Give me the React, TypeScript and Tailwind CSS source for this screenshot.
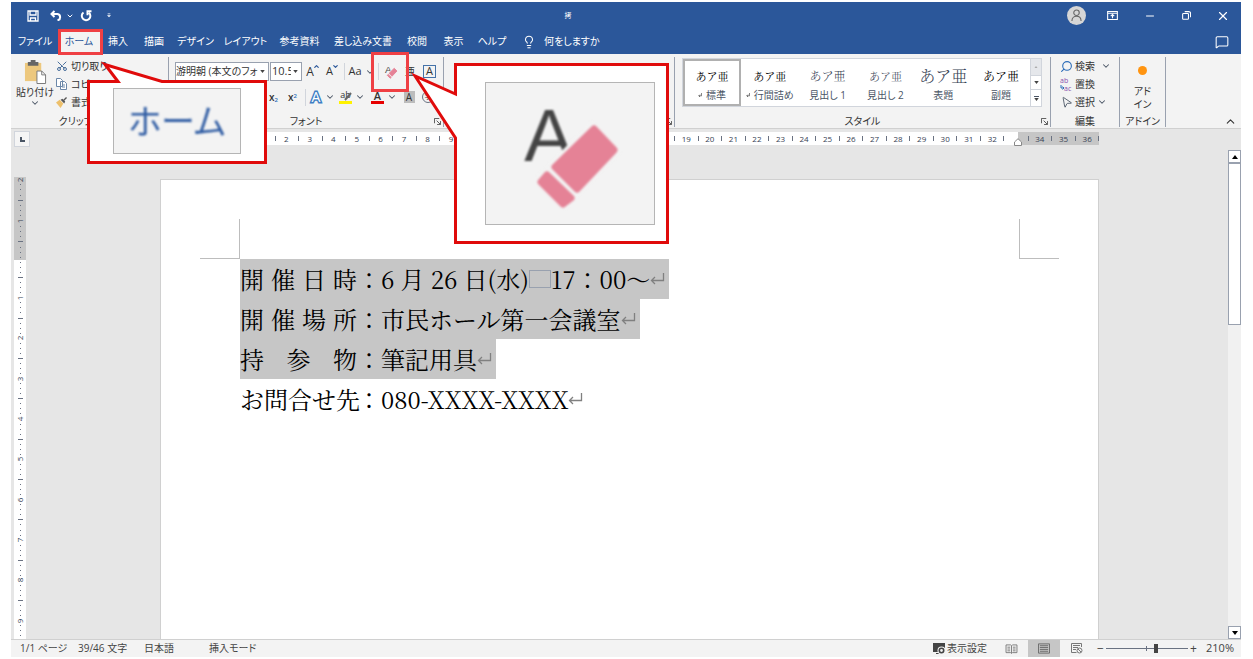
import type { ReactNode } from "react";
import {
  ChevronDown,
  ChevronUp,
  Lightbulb,
  MessageSquare,
  Minus,
  MousePointer2,
  Scissors,
  Search,
  X,
} from "lucide-react";

const tabs = [
  { label: "ファイル", width: "w-[46px]" },
  { label: "ホーム", width: "w-[42px]", active: true },
  { label: "挿入", width: "w-[36px]" },
  { label: "描画", width: "w-[36px]" },
  { label: "デザイン", width: "w-[47px]" },
  { label: "レイアウト", width: "w-[53px]" },
  { label: "参考資料", width: "w-[55px]" },
  { label: "差し込み文書", width: "w-[72px]" },
  { label: "校閲", width: "w-[36px]" },
  { label: "表示", width: "w-[37px]" },
  { label: "ヘルプ", width: "w-[40px]" },
];

const styles = [
  { label: "標準", mark: true, sample: "text-[11px] text-black", active: true },
  { label: "行間詰め", mark: true, sample: "text-[11px] text-black" },
  { label: "見出し 1", sample: "text-[12px] font-light text-gray-700" },
  { label: "見出し 2", sample: "text-[11px] font-light text-gray-700" },
  { label: "表題", sample: "text-[16px] font-light text-gray-700" },
  { label: "副題", sample: "text-[12px] text-black" },
];

const lines = [
  { label: "開催日時", value: "6 月 26 日(水)", box: true, rest: "17：00～", selected: true },
  { label: "開催場所", value: "市民ホール第一会議室", selected: true },
  { label: "持参物", value: "筆記用具", selected: true },
  { label: "お問合せ先", value: "080-XXXX-XXXX", selected: false },
];

function range(from: number, to: number) {
  return Array.from({ length: to - from + 1 }, (_, i) => from + i);
}

function Caret() {
  return (
    <svg viewBox="0 0 6 4" className="pointer-events-none h-[3px] w-[5px] shrink-0" fill="#444">
      <path d="M0 0h6L3 4z" />
    </svg>
  );
}

function Chevron() {
  return <ChevronDown size={10} strokeWidth={2.5} className="shrink-0 text-gray-600" />;
}

function Launcher() {
  return (
    <svg viewBox="0 0 8 8" className="h-[7px] w-[7px]" fill="none" stroke="#444">
      <path d="M.5 6V.5H6M3 3l4 4M7.5 3.5v4h-4" />
    </svg>
  );
}

function EraserIcon({ className }: { className: string }) {
  return (
    <svg viewBox="0 0 96 106" className={`overflow-visible ${className}`}>
      <text
        x="24"
        y="57"
        textAnchor="middle"
        fontSize="74"
        fill="#444"
        fontFamily="Liberation Sans, sans-serif"
      >
        A
      </text>
      <path d="M67 16L12 72l28 34 56-58z" fill="#f3f3f3" />
      <g fill="#e58296" stroke="#e58296" strokeWidth="7" strokeLinejoin="round">
        <path d="M69 25L89 46 52 85 30 63z" />
        <path d="M22 71L46 94 38 100 16 78z" />
      </g>
    </svg>
  );
}

function ReturnMark() {
  return (
    <svg viewBox="0 0 15 14" className="h-[14px] w-[15px] shrink-0" fill="none" stroke="#808080" strokeWidth="1.3">
      <path d="M13.5 1v7.5H1.5M5 5L1.5 8.5 5 12" />
    </svg>
  );
}

type GroupProps = {
  label?: string;
  launcher?: boolean;
  className: string;
  children?: ReactNode;
};

function Group({ label, launcher, className, children }: GroupProps) {
  return (
    <section
      aria-label={label}
      className={`mt-[3px] mb-[1px] flex shrink-0 flex-col border-r border-gray-400 ${className}`}
    >
      <div className="min-h-0 flex-1">{children}</div>
      <div className="grid h-3 grid-cols-[1fr_auto_1fr] items-center">
        <span />
        <span className="text-center text-[10px] leading-3 whitespace-nowrap">{label}</span>
        {launcher && (
          <button type="button" aria-label="詳細設定" className="mr-[2px] justify-self-end">
            <Launcher />
          </button>
        )}
      </div>
    </section>
  );
}

function Divider() {
  return <span className="mx-[3px] h-[17px] w-px shrink-0 bg-gray-300" />;
}

type ToolProps = { label: string; className: string; children: ReactNode };

function Tool({ label, className, children }: ToolProps) {
  return (
    <button
      type="button"
      aria-label={label}
      className={`flex h-[18px] shrink-0 items-center justify-center gap-[3px] ${className}`}
    >
      {children}
    </button>
  );
}

function TitleBar() {
  return (
    <header className="flex h-[27px] items-center text-white">
      <div className="flex w-[45%] items-center pl-4">
        <button type="button" aria-label="上書き保存" className="mr-[11px]">
          <svg viewBox="0 0 12 12" className="h-[12px] w-[12px]" fill="none" stroke="currentColor" strokeWidth="1.3">
            <path d="M1 1h10v10H1zM3 1v4h6V1M3.500 11V8h5v3" />
          </svg>
        </button>
        <button type="button" aria-label="元に戻す" className="flex items-center gap-[4px]">
          <svg viewBox="0 0 12 11" className="h-[11px] w-[12px]" fill="none" stroke="currentColor" strokeWidth="2">
            <path d="M4.500 1L1.500 4l3 3M1.500 4H7.500a3.200 3.200 0 0 1 0 6.300" />
          </svg>
          <ChevronDown size={8} strokeWidth={3} />
        </button>
        <button type="button" aria-label="繰り返し" className="ml-[6px]">
          <svg viewBox="0 0 12 12" className="h-[12px] w-[12px]" fill="none" stroke="currentColor" strokeWidth="2">
            <path d="M3.500 2.500a4.300 4.300 0 1 0 5.500.3M11.500 1.200H7.500v4" />
          </svg>
        </button>
        <button type="button" aria-label="クイック アクセス" className="ml-[15px]">
          <svg viewBox="0 0 6 6" className="h-[5px] w-[4px]" fill="currentColor">
            <path d="M1 0h4v1H1zM0 2.500h6L3 5.500z" />
          </svg>
        </button>
      </div>
      <span className="text-[7px] leading-3 whitespace-nowrap">拷</span>
      <div className="flex flex-1 items-center justify-end pr-[11px]">
        <button
          type="button"
          aria-label="アカウント"
          className="mr-[21px] flex size-[19px] items-center justify-center rounded-full bg-[#d6d6d6]"
        >
          <svg viewBox="0 0 12 14" className="h-[13px] w-[11px]" fill="none" stroke="#666" strokeWidth="1.2">
            <circle cx="6" cy="4" r="3" />
            <path d="M1 13c0-7 10-7 10 0" />
          </svg>
        </button>
        <button type="button" aria-label="リボンの表示オプション" className="mr-[26px]">
          <svg viewBox="0 0 12 10" className="h-[9px] w-[11px]" fill="none" stroke="currentColor" strokeWidth="1.2">
            <path d="M.6.6h10.800v8.800H.6zM.6 2.500h10.800M6 8V4M4 5.800L6 4l2 1.800" />
          </svg>
        </button>
        <button type="button" aria-label="最小化" className="mr-[26px]">
          <Minus size={12} />
        </button>
        <button type="button" aria-label="元のサイズに戻す" className="mr-[25px]">
          <svg viewBox="0 0 10 10" className="h-[9px] w-[9px]" fill="none" stroke="currentColor" strokeWidth="1.2">
            <rect x=".7" y="2.700" width="6.500" height="6.500" rx="1" />
            <path d="M3 .7h4.500a2 2 0 0 1 2 2V7" />
          </svg>
        </button>
        <button type="button" aria-label="閉じる">
          <X size={14} />
        </button>
      </div>
    </header>
  );
}

function TabBar() {
  return (
    <nav className="flex h-[25px] items-end pl-[1px] text-[10px] text-white">
      {tabs.map((tab) => (
        <button
          key={tab.label}
          type="button"
          className={`h-[25px] shrink-0 whitespace-nowrap ${tab.width} ${
            tab.active ? "bg-[#f3f3f3] text-[#2b579a]" : ""
          }`}
        >
          {tab.label}
        </button>
      ))}
      <button type="button" className="ml-[10px] flex h-[25px] items-center gap-[8px] whitespace-nowrap">
        <Lightbulb size={14} strokeWidth={1.8} />
        何をしますか
      </button>
      <button type="button" aria-label="コメント" className="mr-[12px] ml-auto flex h-[25px] items-center">
        <MessageSquare size={14} strokeWidth={1.8} />
      </button>
    </nav>
  );
}

function ClipboardGroup() {
  return (
    <Group label="クリップボード" className="w-[158px]">
      <div className="flex pl-[5px]">
        <button type="button" className="flex w-[38px] flex-col items-center pt-[3px] text-[10px] leading-3 whitespace-nowrap">
          <svg viewBox="0 0 24 25" className="h-[24px] w-[23px]">
            <path d="M1 3h17v19H1z" fill="#edc87e" />
            <path d="M4 2h3V0h5v2h3v4H4z" fill="#666" />
            <path d="M13.500 11.500h5l4 4v9h-9z" fill="#fff" stroke="#777" />
            <path d="M18.500 11.500v4h4" fill="none" stroke="#777" />
          </svg>
          <span className="mt-[2px]">貼り付け</span>
          <Chevron />
        </button>
        <div className="flex flex-col pl-[2px] text-[10px] whitespace-nowrap">
          <button type="button" className="flex h-[18px] items-center gap-[3px]">
            <Scissors size={12} strokeWidth={2} className="-rotate-90 text-[#4a6f9c]" />
            切り取り
          </button>
          <button type="button" className="flex h-[18px] items-center gap-[4px]">
            <svg viewBox="0 0 11 12" className="h-[12px] w-[11px]" fill="#fff" stroke="#6b87a8">
              <path d="M.5.5h4l2 2v6h-6zM4.500 3.500h4l2 2v6h-6z" />
              <path d="M6 7h3M6 9h3" />
            </svg>
            コピー
          </button>
          <button type="button" className="flex h-[18px] items-center gap-[4px]">
            <svg viewBox="0 0 12 12" className="h-[11px] w-[11px]">
              <path d="M0 6l4-3 4 4-3 5z" fill="#edc06c" />
              <path d="M5 3l2-1 3 3-1 2z" fill="#555" />
              <path d="M8 3l3-3 1 1-3 3z" fill="#555" />
            </svg>
            書式のコピー
          </button>
        </div>
      </div>
    </Group>
  );
}

function FontGroup() {
  return (
    <Group label="フォント" launcher className="w-[275px]">
      <div className="flex items-center pt-[5px] pl-[6px]">
        <div className="flex h-[19px] w-[94px] items-center border border-gray-400 bg-white pr-[3px]">
          <select
            aria-label="フォント名"
            className="mr-[2px] w-0 flex-1 appearance-none overflow-hidden text-[10px] whitespace-nowrap"
          >
            <option>游明朝 (本文のフォント)</option>
          </select>
          <Caret />
        </div>
        <div className="ml-px flex h-[19px] w-[32px] items-center border border-gray-400 bg-white pr-[3px] pl-px">
          <select aria-label="フォント サイズ" className="mr-[2px] w-0 flex-1 appearance-none overflow-hidden text-[11px]">
            <option>10.5</option>
          </select>
          <Caret />
        </div>
        <Tool label="フォント サイズの拡大" className="w-[22px]">
          <span className="text-[12px]">A</span>
          <ChevronUp size={7} strokeWidth={4} className="-ml-[4px] self-start text-[#2b579a]" />
        </Tool>
        <Tool label="フォント サイズの縮小" className="w-[17px]">
          <span className="text-[11px]">A</span>
          <ChevronDown size={7} strokeWidth={4} className="-ml-[4px] self-start text-[#2b579a]" />
        </Tool>
        <Divider />
        <Tool label="文字種の変換" className="w-[27px]">
          <span className="text-[11px]">Aa</span>
          <Chevron />
        </Tool>
        <Divider />
        <Tool label="すべての書式をクリア" className="w-[18px]">
          <EraserIcon className="h-[14px] w-[13px]" />
        </Tool>
        <Tool label="ルビ" className="w-[20px]">
          <span className="text-[10px]">亜</span>
        </Tool>
        <Tool label="囲み線" className="w-[19px]">
          <span className="flex size-[13px] items-center justify-center border border-[#4472a8] text-[11px]">A</span>
        </Tool>
      </div>
      <div className="flex items-center pt-[7px] pl-[95px] font-semibold">
        <Tool label="下付き" className="w-[19px]">
          <span className="text-[10px]">
            x<sub className="text-[6px] text-[#2b6cb8]">2</sub>
          </span>
        </Tool>
        <Tool label="上付き" className="w-[19px]">
          <span className="text-[10px]">
            x<sup className="text-[6px] text-[#2b6cb8]">2</sup>
          </span>
        </Tool>
        <Divider />
        <Tool label="文字の効果" className="w-[27px]">
          <svg viewBox="0 0 12 13" className="h-[13px] w-[12px] overflow-visible">
            <text
              x="6"
              y="11"
              textAnchor="middle"
              fontSize="14"
              fontWeight="400"
              fill="#fff"
              stroke="#3f7fc4"
              strokeWidth="3"
              paintOrder="stroke"
            >
              A
            </text>
          </svg>
          <Chevron />
        </Tool>
        <Tool label="蛍光ペンの色" className="w-[32px]">
          <span className="relative flex h-[14px] w-[13px] justify-center border-b-[3px] border-[#fff200] text-[9px] leading-[9px] font-normal">
            ab
            <svg viewBox="0 0 8 9" className="absolute right-0 bottom-0 h-[9px] w-[8px]" fill="none" stroke="#666" strokeWidth="2">
              <path d="M1 8l6-7" />
            </svg>
          </span>
          <Chevron />
        </Tool>
        <Tool label="フォントの色" className="w-[32px]">
          <span className="flex h-[14px] w-[13px] justify-center border-b-[3px] border-[#e60000] text-[11px] leading-[11px]">
            A
          </span>
          <Chevron />
        </Tool>
        <Tool label="文字の網かけ" className="w-[18px]">
          <span className="flex h-[12px] w-[11px] items-center justify-center bg-[#bcbcbc] text-[10px] font-normal">A</span>
        </Tool>
        <Tool label="囲い文字" className="w-[20px]">
          <span className="flex size-[12px] items-center justify-center rounded-full border border-gray-500 text-[7px] font-normal">
            字
          </span>
        </Tool>
      </div>
    </Group>
  );
}

function StylesGroup() {
  return (
    <Group label="スタイル" launcher className="w-[376px]">
      <div className="mt-px ml-[7px] flex h-[49px] w-[360px] border border-gray-300 bg-white">
        <div className="grid flex-1 grid-cols-6">
          {styles.map((style) => (
            <button
              key={style.label}
              type="button"
              className={`flex flex-col items-center whitespace-nowrap ${
                style.active ? "border-2 border-[#b0b0b0] pt-[5px]" : "pt-[7px]"
              }`}
            >
              <span
                className={`flex h-[20px] items-center font-["Noto_Serif_CJK_JP","Noto_Sans_CJK_JP",serif] [font-feature-settings:normal] ${style.sample}`}
              >
                あア亜
              </span>
              <span className="flex items-center gap-[4px] text-[10px] leading-[18px] text-gray-600">
                {style.mark && (
                  <svg viewBox="0 0 5 5" className="h-[4px] w-[4px]" fill="none" stroke="#555">
                    <path d="M4.500 0v3.500H1M2.500 2L1 3.500 2.500 5" />
                  </svg>
                )}
                {style.label}
              </span>
            </button>
          ))}
        </div>
        <div className="grid w-[11px] grid-rows-3 border-l border-gray-300">
          <button type="button" aria-label="前の行" className="flex items-center justify-center bg-gray-200">
            <svg viewBox="0 0 6 4" className="h-[2px] w-[4px]" fill="#aaa">
              <path d="M0 4h6L3 0z" />
            </svg>
          </button>
          <button type="button" aria-label="次の行" className="flex items-center justify-center border-y border-gray-300">
            <Caret />
          </button>
          <button type="button" aria-label="その他" className="flex flex-col items-center justify-center gap-px">
            <span className="h-px w-[5px] bg-gray-600" />
            <Caret />
          </button>
        </div>
      </div>
    </Group>
  );
}

function EditGroup() {
  return (
    <Group label="編集" className="w-[69px]">
      <div className="flex flex-col items-start pl-[9px] text-[10px]">
        <button type="button" className="flex h-[18px] items-center gap-[2px]">
          <Search size={13} className="-scale-x-100 text-[#2b6cb8]" />
          検索
          <span className="ml-[4px]">
            <Chevron />
          </span>
        </button>
        <button type="button" className="flex h-[18px] items-center gap-[2px]">
          <svg viewBox="0 0 13 15" className="h-[15px] w-[13px] overflow-visible" fontSize="7">
            <text x="0" y="6" fill="#8a4fae">
              ab
            </text>
            <text x="4" y="14" fill="#8a4fae">
              ac
            </text>
            <path d="M1 8v3h2.500M2.500 9.500L4 11l-1.500 1.500" fill="none" stroke="#2b6cb8" />
          </svg>
          置換
        </button>
        <button type="button" className="flex h-[18px] items-center gap-[2px]">
          <MousePointer2 size={13} strokeWidth={1.5} className="rotate-12 text-gray-600" />
          選択
          <Chevron />
        </button>
      </div>
    </Group>
  );
}

function Ribbon() {
  return (
    <div className="flex h-[75px] border-b border-[#d0d0d0] bg-[#f3f3f3] text-[#333]">
      <ClipboardGroup />
      <FontGroup />
      <Group launcher className="w-[231px]" />
      <StylesGroup />
      <EditGroup />
      <Group label="アドイン" className="w-[46px]">
        <button type="button" className="flex w-full flex-col items-center pt-[9px] text-[10px] leading-[13px]">
          <span className="mb-[10px] size-[9px] rounded-full bg-[#ff9410]" />
          <span>アド</span>
          <span>イン</span>
        </button>
      </Group>
      <button type="button" aria-label="リボンを折りたたむ" className="mr-[4px] ml-auto self-end">
        <ChevronUp size={13} strokeWidth={2} />
      </button>
    </div>
  );
}

function RulerCells({ from, to }: { from: number; to: number }) {
  return (
    <>
      {range(from, to).map((n) => (
        <span key={n} className="flex flex-1 basis-0 items-center justify-center">
          {n}
        </span>
      ))}
    </>
  );
}

// Marks sit on the boundaries between the numbered cells
function RulerTicks({ count }: { count: number }) {
  return (
    <div className="absolute inset-0 flex items-center justify-between">
      {range(0, count).map((n) => (
        <span key={n} className="h-[5px] w-px bg-gray-500" />
      ))}
    </div>
  );
}

function HorizontalRuler() {
  return (
    <div className="flex h-[21px] shrink-0 pr-[13px]">
      <div className="w-[20px] shrink-0 pt-[2px] pl-[3px]">
        <button
          type="button"
          aria-label="タブの種類"
          className="flex size-[16px] items-center justify-center border border-gray-300 bg-[#f5f5f5]"
        >
          <span className="size-[5px] border-b-2 border-l-2 border-gray-600" />
        </button>
      </div>
      <div className="flex flex-1 justify-center pt-[3px]">
        <div className="flex h-[13px] w-[939px] text-[8px] leading-none text-gray-700">
          <div className="w-[80px] bg-[#c6c6c6]" />
          <div className="flex-1 bg-white pr-[14px] pl-[11px]">
            <div className="relative flex h-full">
              <RulerCells from={1} to={32} />
              <RulerTicks count={32} />
            </div>
          </div>
          <div className="relative w-[81px] bg-[#c6c6c6] pl-[10px]">
            <svg viewBox="0 0 8 8" className="absolute top-[6px] -left-[4px] h-[8px] w-[8px]" fill="#fff" stroke="#888">
              <path d="M4 .7L7.500 4v3.500h-7V4z" />
            </svg>
            <div className="relative flex h-full">
              <RulerCells from={34} to={36} />
              <RulerTicks count={3} />
            </div>
          </div>
        </div>
      </div>
    </div>
  );
}

function VerticalSlots({ from, to }: { from: number; to: number }) {
  return (
    <>
      {range(from, to).map((i) => (
        <span key={i} className="flex min-h-0 flex-1 basis-0 items-center justify-center">
          {i % 8 === 0 && <span className="-rotate-90 text-[8px] leading-none">{Math.abs(i / 8)}</span>}
          {Math.abs(i % 8) === 4 && <span className="h-px w-[5px] bg-gray-500" />}
          {i % 4 !== 0 && <span className="size-px bg-gray-500" />}
        </span>
      ))}
    </>
  );
}

function VerticalRuler() {
  return (
    <div className="flex w-[20px] shrink-0 flex-col pt-[27px] pr-[5px] pl-[3px] text-gray-700">
      <div className="flex h-[83px] shrink-0 flex-col bg-[#c6c6c6]">
        <VerticalSlots from={-16} to={-1} />
      </div>
      <div className="flex flex-1 flex-col bg-white">
        <VerticalSlots from={1} to={75} />
      </div>
    </div>
  );
}

function Page() {
  return (
    <article className="mt-[29px] w-[939px] shrink-0 border border-b-0 border-[#d0d0d0] bg-white pt-[39px]">
      <div className="flex justify-between px-[39px]">
        <span className="size-[40px] border-r border-b border-[#bdbdbd]" />
        <span className="size-[40px] border-b border-l border-[#bdbdbd]" />
      </div>
      <div className='flex flex-col items-start pl-[79px] font-["Noto_Serif_CJK_JP","Noto_Sans_CJK_JP",serif] text-[24px] leading-[40px] font-normal text-black [font-feature-settings:normal]'>
        {lines.map((line) => (
          <p
            key={line.label}
            className={`flex h-[40px] items-center pr-[4px] whitespace-nowrap ${line.selected ? "bg-[#c6c6c6]" : ""}`}
          >
            <span className="flex w-[117px] justify-between">
              {line.label.split("").map((char) => (
                <span key={char}>{char}</span>
              ))}
            </span>
            <span>：{line.value}</span>
            {line.box && <span className="h-[18px] w-[22px] border border-gray-400" />}
            {line.rest && <span>{line.rest}</span>}
            <ReturnMark />
          </p>
        ))}
      </div>
    </article>
  );
}

function ScrollBar() {
  return (
    <div className="flex w-[13px] shrink-0 flex-col bg-[#f1f1f1]">
      <button type="button" aria-label="上へ" className="flex h-[13px] items-center justify-center border border-gray-400 bg-white">
        <svg viewBox="0 0 6 4" className="h-[4px] w-[6px]">
          <path d="M0 4h6L3 0z" />
        </svg>
      </button>
      <div className="h-[162px] border border-gray-400 bg-white" />
      <button
        type="button"
        aria-label="下へ"
        className="mt-auto flex h-[13px] items-center justify-center border border-gray-400 bg-white"
      >
        <svg viewBox="0 0 6 4" className="h-[4px] w-[6px]">
          <path d="M0 0h6L3 4z" />
        </svg>
      </button>
    </div>
  );
}

function StatusBar() {
  return (
    <footer className="flex h-[18px] shrink-0 items-center border-t border-[#d0d0d0] bg-[#f3f3f3] text-[10px] whitespace-nowrap text-[#444]">
      <span className="w-[58px] pl-[9px]">1/1 ページ</span>
      <span className="w-[66px] pl-[9px]">39/46 文字</span>
      <span className="w-[65px] pl-[9px]">日本語</span>
      <span className="pl-[9px]">挿入モード</span>
      <div className="ml-auto flex h-full items-center">
        <button type="button" className="flex items-center gap-px">
          <svg viewBox="0 0 13 12" className="h-[12px] w-[13px]">
            <path d="M0 0h12v9H0zM3 10h4v1H3z" fill="#444" />
            <circle cx="8.500" cy="7.500" r="4" fill="#f3f3f3" />
            <circle cx="8.500" cy="7.500" r="2.200" fill="none" stroke="#444" strokeWidth="1.600" />
          </svg>
          表示設定
        </button>
        <button type="button" aria-label="閲覧モード" className="ml-[18px]">
          <svg viewBox="0 0 13 11" className="h-[10px] w-[13px]" fill="none" stroke="#777">
            <path d="M.5 1h5l1 1 1-1h5v8.500h-5l-1 1-1-1h-5zM6.500 2v8M2 3.500h3M2 5.500h3M2 7.500h3M8 3.500h3M8 5.500h3M8 7.500h3" />
          </svg>
        </button>
        <button
          type="button"
          aria-label="印刷レイアウト"
          aria-pressed="true"
          className="ml-[10px] flex h-full w-[32px] items-center justify-center bg-[#c6c6c6]"
        >
          <svg viewBox="0 0 13 11" className="h-[11px] w-[12px]" fill="none" stroke="#666">
            <path d="M.5.5h12v10H.5zM2 2.500h9M2 4.500h9M2 6.500h9M2 8.500h9" />
          </svg>
        </button>
        <button type="button" aria-label="Web レイアウト" className="ml-[11px]">
          <svg viewBox="0 0 12 11" className="h-[11px] w-[12px]" fill="none" stroke="#777">
            <path d="M10.500 4V.5H.5v9h5M2 2.500h7M2 4.500h5M2 6.500h3" />
            <circle cx="8.500" cy="7.500" r="2.500" />
            <path d="M7 6l3 3" />
          </svg>
        </button>
        <button type="button" aria-label="縮小" className="ml-[12px] w-[11px] text-[12px] leading-none">
          −
        </button>
        <div className="relative flex items-center">
          <span className="absolute left-[40px] h-[5px] w-px bg-gray-500" />
          <input
            type="range"
            aria-label="ズーム"
            min={0}
            max={100}
            defaultValue={62}
            className="relative h-[10px] w-[82px] appearance-none bg-transparent [&::-webkit-slider-runnable-track]:h-px [&::-webkit-slider-runnable-track]:bg-gray-500 [&::-webkit-slider-thumb]:-mt-[4px] [&::-webkit-slider-thumb]:h-[9px] [&::-webkit-slider-thumb]:w-[4px] [&::-webkit-slider-thumb]:appearance-none [&::-webkit-slider-thumb]:bg-[#444]"
          />
        </div>
        <button type="button" aria-label="拡大" className="w-[11px] text-[12px] leading-none">
          +
        </button>
        <span className="w-[42px] pr-[7px] text-right text-[11px]">210%</span>
      </div>
    </footer>
  );
}

function HomeCallout() {
  return (
    <>
      <div className="absolute top-[29px] left-[58px] h-[26px] w-[45px] border-[3px] border-[#ef4044]" />
      <div className="absolute top-[55px] left-[85px] h-[112px] w-[185px]">
        <svg viewBox="0 0 185 112" className="absolute inset-0" fill="#fff" stroke="#e00b0b" strokeWidth="3">
          <path d="M3.500 26.500H33L20 9.500 77 26.500H180.500V107.500H3.500z" />
        </svg>
        <div className="absolute top-[33px] left-[28px] flex h-[66px] w-[128px] items-center justify-center border border-[#b5b5b5] bg-[#f3f3f3]">
          <span className="text-[34px] leading-none font-normal whitespace-nowrap text-[#2f5ca3] blur-[1px]">ホーム</span>
        </div>
      </div>
    </>
  );
}

function EraserCallout() {
  return (
    <>
      <div className="absolute top-[52px] left-[371px] h-[40px] w-[38px] border-[3px] border-[#ef4044]" />
      <div className="absolute top-[60px] left-[405px] h-[186px] w-[267px]">
        <svg viewBox="0 0 267 186" className="absolute inset-0" fill="#fff" stroke="#e00b0b" strokeWidth="3">
          <path d="M50.500 4.500H262.500V182.500H50.500V78L10 16 50.500 34z" />
        </svg>
        <div className="absolute top-[22px] left-[80px] flex h-[143px] w-[170px] border border-[#b5b5b5] bg-[#f3f3f3] pt-[21px] pl-[39px]">
          <EraserIcon className="h-[106px] w-[96px] blur-[1px]" />
        </div>
      </div>
    </>
  );
}

export default function App() {
  return (
    <div className='relative flex h-screen flex-col overflow-hidden bg-white pt-[2px] pr-[12px] pb-[2px] pl-[11px] font-["Open_Sans","Noto_Sans_CJK_JP",sans-serif] [font-feature-settings:"palt"]'>
      <div className="shrink-0 bg-[#2b579a]">
        <TitleBar />
        <TabBar />
      </div>
      <Ribbon />
      <main className="flex min-h-0 flex-1 flex-col bg-[#e6e6e6]">
        <HorizontalRuler />
        <div className="flex min-h-0 flex-1">
          <VerticalRuler />
          <div className="flex min-w-0 flex-1 justify-center overflow-hidden">
            <Page />
          </div>
          <ScrollBar />
        </div>
      </main>
      <StatusBar />

      <HomeCallout />
      <EraserCallout />
    </div>
  );
}
